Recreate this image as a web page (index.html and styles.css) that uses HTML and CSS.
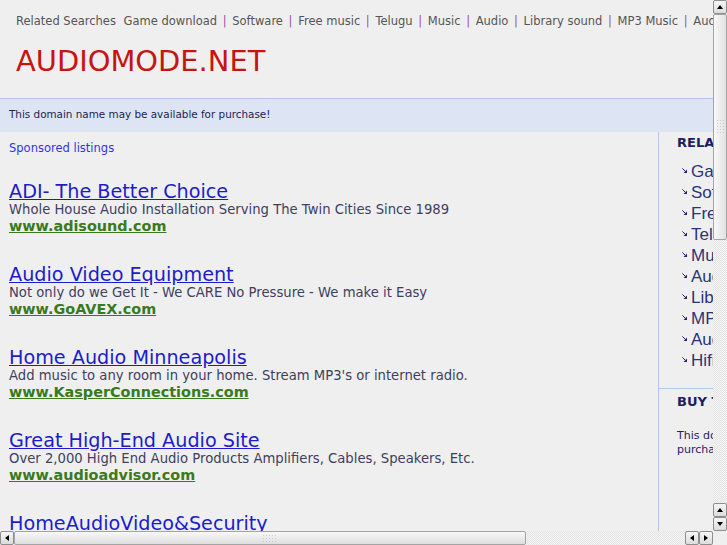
FILE: index.html
```html
<!DOCTYPE html>
<html>
<head>
<meta charset="utf-8">
<title>audiomode.net</title>
<link rel="stylesheet" href="styles.css">
</head>
<body>
<div class="window">
  <div class="viewport">
    <div class="page">
      <div class="header">
        <div class="toplinks">
          <span class="label">Related Searches</span>
          <a href="#">Game download</a> <span class="sep">|</span>
          <a href="#">Software</a> <span class="sep">|</span>
          <a href="#">Free music</a> <span class="sep">|</span>
          <a href="#">Telugu</a> <span class="sep">|</span>
          <a href="#">Music</a> <span class="sep">|</span>
          <a href="#">Audio</a> <span class="sep">|</span>
          <a href="#">Library sound</a> <span class="sep">|</span>
          <a href="#">MP3 Music</a> <span class="sep">|</span>
          <a href="#">Audio equipment</a>
        </div>
        <h1 class="title">AUDIOMODE.NET</h1>
      </div>
      <div class="band">This domain name may be available for purchase!</div>
      <div class="content">
        <div class="main">
          <div class="sponsored">Sponsored listings</div>
          <div class="listing">
            <a class="ltitle" href="#">ADI- The Better Choice</a>
            <div class="ldesc">Whole House Audio Installation Serving The Twin Cities Since 1989</div>
            <a class="lurl" href="#">www.adisound.com</a>
          </div>
          <div class="listing">
            <a class="ltitle" href="#">Audio Video Equipment</a>
            <div class="ldesc">Not only do we Get It - We CARE No Pressure - We make it Easy</div>
            <a class="lurl" href="#">www.GoAVEX.com</a>
          </div>
          <div class="listing">
            <a class="ltitle" href="#">Home Audio Minneapolis</a>
            <div class="ldesc">Add music to any room in your home. Stream MP3's or internet radio.</div>
            <a class="lurl" href="#">www.KasperConnections.com</a>
          </div>
          <div class="listing">
            <a class="ltitle" href="#">Great High-End Audio Site</a>
            <div class="ldesc">Over 2,000 High End Audio Products Amplifiers, Cables, Speakers, Etc.</div>
            <a class="lurl" href="#">www.audioadvisor.com</a>
          </div>
          <div class="listing">
            <a class="ltitle" href="#">HomeAudioVideo&amp;Security</a>
            <div class="ldesc">Home theater, whole house audio and security systems installed.</div>
            <a class="lurl" href="#">www.homeaudiovideo.com</a>
          </div>
        </div>
        <div class="side">
          <div class="sblock">
            <div class="shead">RELATED SEARCHES</div>
            <ul class="slist">
              <li><svg class="arr" viewBox="0 0 5 5" width="5" height="5"><path d="M0.4 0.4 L3.2 3.2" stroke="#1a2468" stroke-width="1"/><path d="M5 1.5 L5 5 L1.5 5 Z" fill="#1a2468"/></svg><a href="#">Game download</a></li>
              <li><svg class="arr" viewBox="0 0 5 5" width="5" height="5"><path d="M0.4 0.4 L3.2 3.2" stroke="#1a2468" stroke-width="1"/><path d="M5 1.5 L5 5 L1.5 5 Z" fill="#1a2468"/></svg><a href="#">Software</a></li>
              <li><svg class="arr" viewBox="0 0 5 5" width="5" height="5"><path d="M0.4 0.4 L3.2 3.2" stroke="#1a2468" stroke-width="1"/><path d="M5 1.5 L5 5 L1.5 5 Z" fill="#1a2468"/></svg><a href="#">Free music</a></li>
              <li><svg class="arr" viewBox="0 0 5 5" width="5" height="5"><path d="M0.4 0.4 L3.2 3.2" stroke="#1a2468" stroke-width="1"/><path d="M5 1.5 L5 5 L1.5 5 Z" fill="#1a2468"/></svg><a href="#">Telugu</a></li>
              <li><svg class="arr" viewBox="0 0 5 5" width="5" height="5"><path d="M0.4 0.4 L3.2 3.2" stroke="#1a2468" stroke-width="1"/><path d="M5 1.5 L5 5 L1.5 5 Z" fill="#1a2468"/></svg><a href="#">Music</a></li>
              <li><svg class="arr" viewBox="0 0 5 5" width="5" height="5"><path d="M0.4 0.4 L3.2 3.2" stroke="#1a2468" stroke-width="1"/><path d="M5 1.5 L5 5 L1.5 5 Z" fill="#1a2468"/></svg><a href="#">Audio</a></li>
              <li><svg class="arr" viewBox="0 0 5 5" width="5" height="5"><path d="M0.4 0.4 L3.2 3.2" stroke="#1a2468" stroke-width="1"/><path d="M5 1.5 L5 5 L1.5 5 Z" fill="#1a2468"/></svg><a href="#">Library sound</a></li>
              <li><svg class="arr" viewBox="0 0 5 5" width="5" height="5"><path d="M0.4 0.4 L3.2 3.2" stroke="#1a2468" stroke-width="1"/><path d="M5 1.5 L5 5 L1.5 5 Z" fill="#1a2468"/></svg><a href="#">MP3 Music</a></li>
              <li><svg class="arr" viewBox="0 0 5 5" width="5" height="5"><path d="M0.4 0.4 L3.2 3.2" stroke="#1a2468" stroke-width="1"/><path d="M5 1.5 L5 5 L1.5 5 Z" fill="#1a2468"/></svg><a href="#">Audio equipment</a></li>
              <li><svg class="arr" viewBox="0 0 5 5" width="5" height="5"><path d="M0.4 0.4 L3.2 3.2" stroke="#1a2468" stroke-width="1"/><path d="M5 1.5 L5 5 L1.5 5 Z" fill="#1a2468"/></svg><a href="#">Hifi audio</a></li>
            </ul>
          </div>
          <div class="sblock buy">
            <div class="shead">BUY THIS DOMAIN</div>
            <p class="stext">This domain name may be available for<br>purchase!</p>
          </div>
        </div>
      </div>
    </div>
  </div>
  <div class="vscroll">
    <div class="btn"><span class="tri up"></span></div>
    <div class="thumb vthumb"><span class="grip"></span></div>
    <div class="track"></div>
    <div class="btn"><span class="tri up"></span></div>
    <div class="btn"><span class="tri down"></span></div>
  </div>
  <div class="hscroll">
    <div class="btn"><span class="tri left"></span></div>
    <div class="thumb hthumb"><span class="grip"></span></div>
    <div class="track"></div>
    <div class="btn"><span class="tri left"></span></div>
    <div class="btn"><span class="tri right"></span></div>
  </div>
  <div class="corner"></div>
</div>
</body>
</html>
```

FILE: styles.css
```css
html, body {
  margin: 0;
  padding: 0;
  overflow: hidden;
  background: #efefef;
}

.window {
  width: 727px;
  height: 545px;
  display: grid;
  grid-template-columns: 713px 14px;
  grid-template-rows: 531px 14px;
  font-family: "DejaVu Sans", sans-serif;
}

.viewport {
  overflow: hidden;
  background: #efefef;
}

.page {
  width: 880px;
  min-height: 531px;
}

a { text-decoration: none; }

.header {
  height: 98px;
  border-bottom: 1px solid #b4c6e6;
}

.toplinks {
  padding: 14px 0 0 16px;
  font-size: 11.5px;
  line-height: 14px;
  color: #555;
  white-space: nowrap;
}

.toplinks .label { margin-right: 4px; }
.toplinks a { color: #555; }
.toplinks .sep { color: #a050a0; margin: 0 2px; }

.title {
  margin: 18px 0 0 16px;
  font-size: 28.9px;
  line-height: 30px;
  font-weight: normal;
  color: #c81410;
}

.band {
  height: 33px;
  background: #dde5f4;
  padding-left: 9px;
  font-size: 10.4px;
  line-height: 30px;
  color: #1c2350;
}

.content {
  display: flex;
}

.main {
  flex: none;
  width: 649px;
  padding: 9px 0 0 9px;
  border-right: 1px solid #b4c6e6;
  min-height: 400px;
}

.sponsored {
  font-size: 11.5px;
  line-height: 14px;
  color: #3333e6;
  margin-bottom: 27px;
}

.listing {
  margin-bottom: 31px;
}

.ltitle {
  display: block;
  font-size: 19.2px;
  line-height: 20px;
  color: #1c1ccc;
  text-decoration: underline;
  width: max-content;
}

.ldesc {
  font-size: 13.2px;
  line-height: 16px;
  color: #3e3e60;
  white-space: nowrap;
}

.lurl {
  display: block;
  font-size: 14.4px;
  line-height: 16px;
  font-weight: bold;
  color: #3a7a1c;
  text-decoration: underline;
  width: max-content;
}

.side {
  flex: 1;
  color: #1a2468;
}

.sblock {
  padding: 3px 0 17px 18px;
  border-bottom: 1px solid #b4c6e6;
}

.shead {
  font-size: 13px;
  font-weight: bold;
  line-height: 16px;
  white-space: nowrap;
  color: #1a2060;
}

.slist {
  list-style: none;
  margin: 10px 0 0 0;
  padding: 0 0 0 5px;
}

.slist li {
  display: flex;
  align-items: center;
  gap: 4px;
  height: 21px;
  font-family: "Liberation Sans", Arial, sans-serif;
  font-size: 17px;
  white-space: nowrap;
}

.slist a { color: #2a3478; }

.arr { flex: none; margin-top: -3px; }

.buy {
  border-bottom: none;
  padding-top: 5px;
}

.stext {
  margin: 19px 0 0 0;
  font-size: 11px;
  line-height: 14px;
  white-space: nowrap;
  color: #1a2468;
}

/* scrollbars */
.vscroll, .hscroll {
  display: flex;
  background: repeating-conic-gradient(#e4e4e4 0 25%, #f4f4f4 0 50%) 0 0 / 2px 2px;
}

.vscroll { flex-direction: column; }
.hscroll { flex-direction: row; }

.track { flex: 1; }

.btn {
  box-sizing: border-box;
  width: 14px;
  height: 14px;
  flex: none;
  border: 1px solid #8e8e8e;
  border-radius: 2px;
  background: linear-gradient(#f6f6f6, #dcdcdc);
  display: flex;
  align-items: center;
  justify-content: center;
}

.thumb {
  box-sizing: border-box;
  flex: none;
  border: 1px solid #a4a4a4;
  border-radius: 2px;
  display: flex;
  align-items: flex-start;
  justify-content: flex-start;
}

.vthumb {
  height: 226px;
  background: linear-gradient(90deg, #f8f8f8, #e2e2e2);
}

.hthumb {
  width: 512px;
  background: linear-gradient(#f8f8f8, #dedede);
}

.grip {
  background: radial-gradient(circle, #cdcdcd 0.6px, transparent 0.8px) 0 0 / 3px 3px;
}

.vthumb .grip { width: 9px; height: 15px; margin: 104px 0 0 2px; }
.hthumb .grip { width: 15px; height: 9px; margin: 2px 0 0 247px; }

.tri { width: 0; height: 0; border: 0 solid transparent; }
.tri.up { border-width: 0 3.5px 4px; border-bottom-color: #000; }
.tri.down { border-width: 4px 3.5px 0; border-top-color: #000; }
.tri.left { border-width: 3.5px 4px 3.5px 0; border-right-color: #000; }
.tri.right { border-width: 3.5px 0 3.5px 4px; border-left-color: #000; }

.corner { background: #efefef; }
```
